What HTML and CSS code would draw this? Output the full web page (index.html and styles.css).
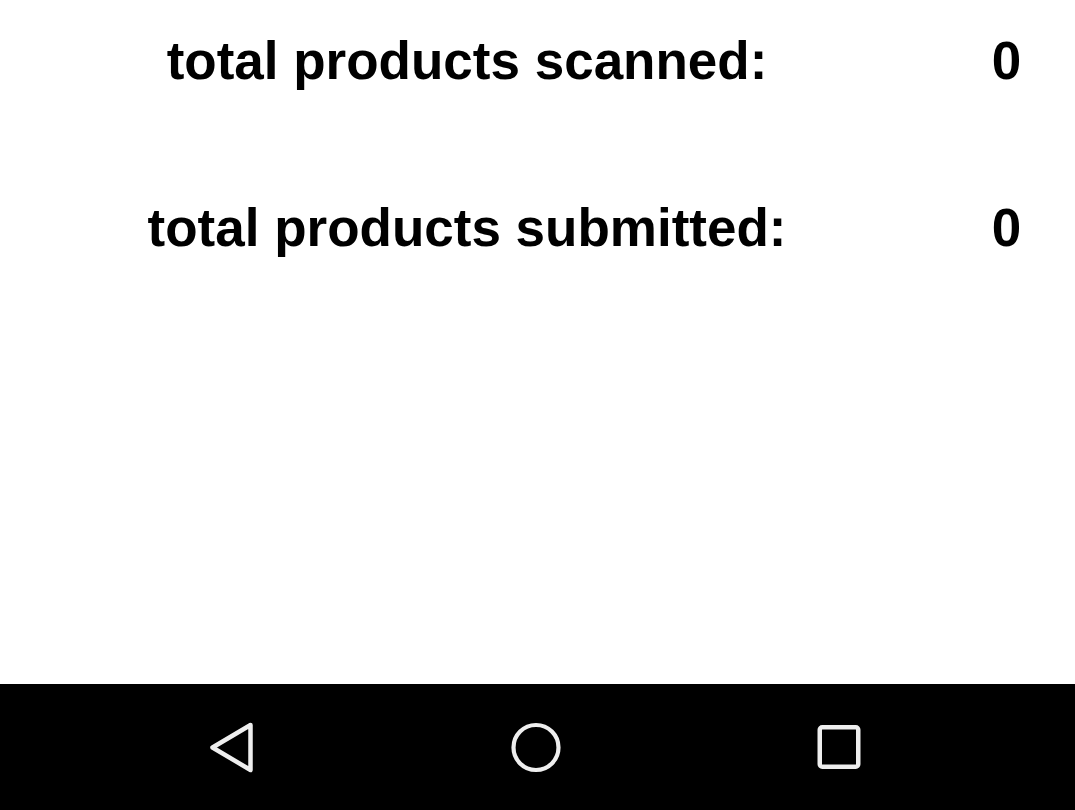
FILE: index.html
```html
<!DOCTYPE html>
<html>
<head>
<meta charset="utf-8">
<link rel="stylesheet" href="styles.css">
</head>
<body>
<div class="screen">
  <main class="stats">
    <div class="row">
      <div class="label">total products scanned:</div>
      <div class="value">0</div>
    </div>
    <div class="row">
      <div class="label">total products submitted:</div>
      <div class="value">0</div>
    </div>
  </main>
  <nav class="navbar">
    <div class="nav-btn">
      <svg width="48" height="54" viewBox="0 0 48 54"><path d="M41.5 5 L3.5 27.5 L41.5 50 Z" fill="none" stroke="#eeeeee" stroke-width="4.5" stroke-linejoin="round"/></svg>
    </div>
    <div class="nav-btn">
      <svg width="54" height="54" viewBox="0 0 54 54"><circle cx="27" cy="27.5" r="22.5" fill="none" stroke="#eeeeee" stroke-width="4.2"/></svg>
    </div>
    <div class="nav-btn">
      <svg width="48" height="48" viewBox="0 0 48 48"><rect x="4.75" y="4.25" width="38.5" height="39.5" rx="2.5" fill="none" stroke="#eeeeee" stroke-width="4.5"/></svg>
    </div>
  </nav>
</div>
</body>
</html>
```
FILE: styles.css
```css
html, body {
  margin: 0;
  padding: 0;
  background: #ffffff;
}
.screen {
  width: 1075px;
  height: 810px;
  display: flex;
  flex-direction: column;
}
.stats {
  flex: 1;
  padding-top: 23px;
  display: flex;
  flex-direction: column;
  gap: 92px;
}
.row {
  display: flex;
  align-items: center;
  height: 75px;
  font-family: "Liberation Sans", Arial, sans-serif;
  font-weight: bold;
  font-size: 53px;
  color: #000;
}
.label {
  width: 934px;
  text-align: center;
}
.value {
  flex: 1;
  padding-left: 4px;
  text-align: center;
}
.navbar {
  height: 126px;
  background: #000;
  display: flex;
  align-items: center;
  justify-content: center;
  padding-right: 4px;
}
.nav-btn {
  width: 303px;
  display: flex;
  justify-content: center;
  align-items: center;
}
```
